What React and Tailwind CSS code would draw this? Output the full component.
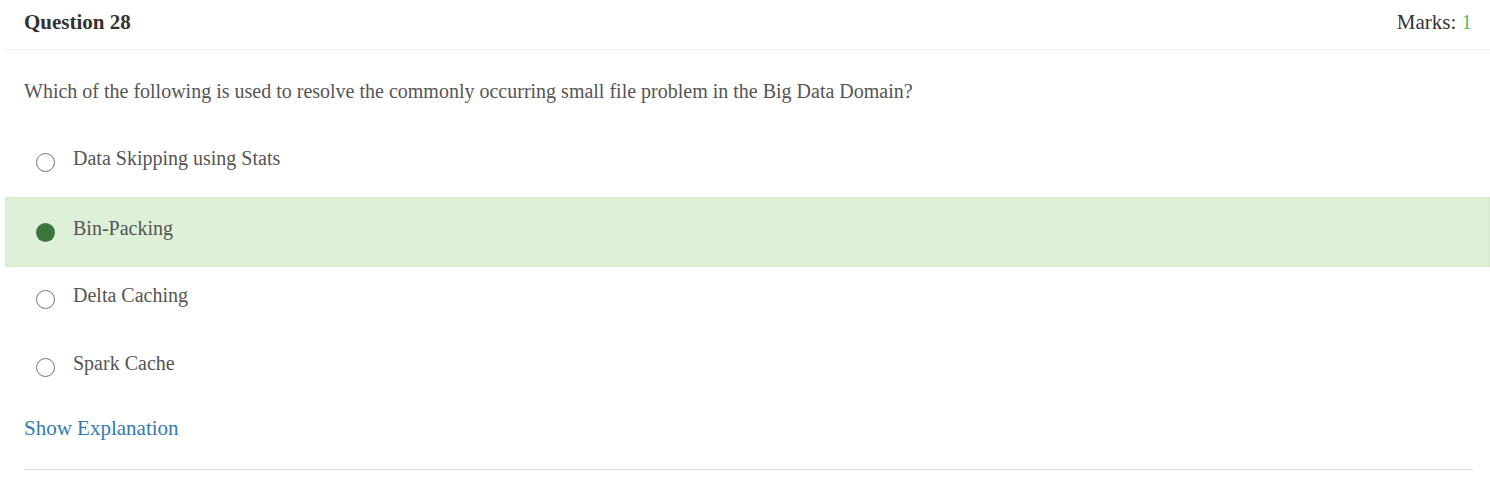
const options = [
  { label: "Data Skipping using Stats", correct: false, cls: "" },
  { label: "Bin-Packing", correct: true, cls: "mt-px h-[70px]" },
  { label: "Delta Caching", correct: false, cls: "-mt-[2px]" },
  { label: "Spark Cache", correct: false, cls: "" },
];

const App = () => {
  return (
    <div className="bg-white min-h-screen font-['Liberation_Serif',serif] text-[20px]">
      <div className="pl-[5px]">
        {/* Header */}
        <div className="flex justify-between items-center h-[50px] pb-[5px] pl-[19px] pr-[18px] border-b border-[#eeeeee]">
          <h3 className="font-bold text-[21px] text-[#333333] leading-none">Question 28</h3>
          <div className="text-[21px] text-[#333333] leading-none">
            Marks: <span className="text-[#5cb85c]">1</span>
          </div>
        </div>

        {/* Question */}
        <p className="pl-[19px] pt-[27px] text-[#555555] leading-[28px]">
          Which of the following is used to resolve the commonly occurring small file problem in the Big Data Domain?
        </p>

        {/* Options */}
        <div className="mt-[23px]">
          {options.map((opt) => (
            <div
              key={opt.label}
              className={`flex items-center h-[68px] border ${opt.cls} ${
                opt.correct ? "bg-[#dff0d8] border-[#d6e9c6]" : "border-transparent"
              }`}
            >
              <span
                className={`ml-[30px] w-[19px] h-[19px] rounded-full shrink-0 ${
                  opt.correct ? "bg-[#3c763d]" : "border border-[#757575]"
                }`}
              />
              <span className="ml-[18px] text-[#555555] leading-none -mt-[8px]">{opt.label}</span>
            </div>
          ))}
        </div>

        {/* Explanation */}
        <div className="pl-[19px] mt-[17px] text-[21px] leading-none">
          <a href="#" className="block w-fit text-[#337ab7]">Show Explanation</a>
        </div>
        <div className="ml-[19px] mr-[17px] mt-[30px] border-t border-[#dddddd]" />
      </div>
    </div>
  );
};

export default App;
